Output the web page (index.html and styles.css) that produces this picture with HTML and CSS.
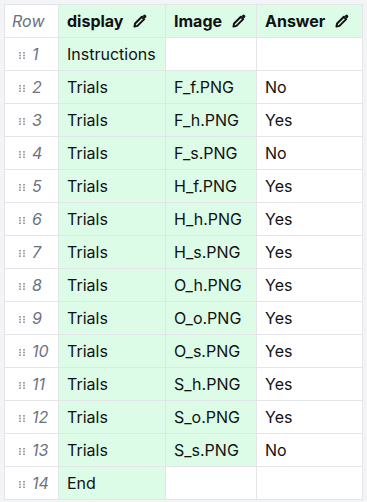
FILE: index.html
```html
<!DOCTYPE html>
<html lang="en">
<head>
    <meta charset="UTF-8">
    <meta name="viewport" content="width=device-width, initial-scale=1.0">
    <title>Trial List</title>
    <link rel="stylesheet" href="styles.css">
</head>
<body>
    <table class="trial-table">
        <colgroup>
            <col class="col-row">
            <col class="col-display">
            <col class="col-image">
            <col class="col-answer">
        </colgroup>
        <thead>
            <tr>
                <th class="row-head">Row</th>
                <th class="var-head">display<svg class="pencil" viewBox="0 0 12 12"><path d="M1.2 10.8 L1.8 8.2 L7.6 2.4 L9.6 4.4 L3.8 10.2 Z" fill="none" stroke="#111" stroke-width="1.7" stroke-linejoin="round"/><path d="M8.2 1.8 L9.2 0.8 Q10 0.1 10.8 0.9 L11.1 1.2 Q11.9 2 11.2 2.8 L10.2 3.8 Z" fill="#111"/></svg></th>
                <th class="var-head">Image<svg class="pencil" viewBox="0 0 12 12"><path d="M1.2 10.8 L1.8 8.2 L7.6 2.4 L9.6 4.4 L3.8 10.2 Z" fill="none" stroke="#111" stroke-width="1.7" stroke-linejoin="round"/><path d="M8.2 1.8 L9.2 0.8 Q10 0.1 10.8 0.9 L11.1 1.2 Q11.9 2 11.2 2.8 L10.2 3.8 Z" fill="#111"/></svg></th>
                <th class="var-head">Answer<svg class="pencil" viewBox="0 0 12 12"><path d="M1.2 10.8 L1.8 8.2 L7.6 2.4 L9.6 4.4 L3.8 10.2 Z" fill="none" stroke="#111" stroke-width="1.7" stroke-linejoin="round"/><path d="M8.2 1.8 L9.2 0.8 Q10 0.1 10.8 0.9 L11.1 1.2 Q11.9 2 11.2 2.8 L10.2 3.8 Z" fill="#111"/></svg></th>
            </tr>
        </thead>
        <tbody id="rows"></tbody>
    </table>

    <script>
        const trials = [
            ['Instructions', '', ''],
            ['Trials', 'F_f.PNG', 'No'],
            ['Trials', 'F_h.PNG', 'Yes'],
            ['Trials', 'F_s.PNG', 'No'],
            ['Trials', 'H_f.PNG', 'Yes'],
            ['Trials', 'H_h.PNG', 'Yes'],
            ['Trials', 'H_s.PNG', 'Yes'],
            ['Trials', 'O_h.PNG', 'Yes'],
            ['Trials', 'O_o.PNG', 'Yes'],
            ['Trials', 'O_s.PNG', 'Yes'],
            ['Trials', 'S_h.PNG', 'Yes'],
            ['Trials', 'S_o.PNG', 'Yes'],
            ['Trials', 'S_s.PNG', 'No'],
            ['End', '', '']
        ];

        const grip = '<svg class="grip" viewBox="0 0 6 7"><rect x="0" y="0" width="2" height="1.6"/><rect x="4" y="0" width="2" height="1.6"/><rect x="0" y="2.7" width="2" height="1.6"/><rect x="4" y="2.7" width="2" height="1.6"/><rect x="0" y="5.4" width="2" height="1.6"/><rect x="4" y="5.4" width="2" height="1.6"/></svg>';

        const tbody = document.getElementById('rows');
        trials.forEach((t, i) => {
            const tr = document.createElement('tr');
            tr.innerHTML =
                '<td class="row-num">' + grip + '<span>' + (i + 1) + '</span></td>' +
                '<td class="cell used">' + t[0] + '</td>' +
                '<td class="cell' + (t[1] ? ' used' : '') + '">' + t[1] + '</td>' +
                '<td class="cell">' + t[2] + '</td>';
            tbody.appendChild(tr);
        });
    </script>
</body>
</html>
```

FILE: styles.css
```css
* {
    box-sizing: border-box;
}

body {
    margin: 0;
    padding: 4px 5px 4px 4px;
    background: #f3f4f6;
    font-family: Inter, 'Noto Sans', sans-serif;
    font-size: 16px;
    color: #111;
}

.trial-table {
    border-collapse: collapse;
    table-layout: fixed;
    width: 358px;
    background: white;
}

.col-row { width: 54px; }
.col-display { width: 107px; }
.col-image { width: 91px; }
.col-answer { width: 106px; }

.trial-table th,
.trial-table td {
    border: 1px solid #e3e5e8;
    height: 33px;
    padding: 0 8px;
    text-align: left;
    white-space: nowrap;
}

.row-head {
    font-weight: 400;
    font-style: italic;
    color: #6b7280;
    padding-left: 7px !important;
}

.var-head {
    background: #dcfce7;
    font-weight: 700;
}

.pencil {
    width: 14px;
    height: 14px;
    margin-left: 10px;
    vertical-align: -1px;
}

.row-num {
    color: #6b7280;
    font-style: italic;
}

.row-num .grip {
    width: 6px;
    height: 7px;
    fill: #9ca3af;
    margin-left: 6px;
    margin-right: 7px;
    vertical-align: 1px;
}

.cell.used {
    background: #dcfce7;
}
```
